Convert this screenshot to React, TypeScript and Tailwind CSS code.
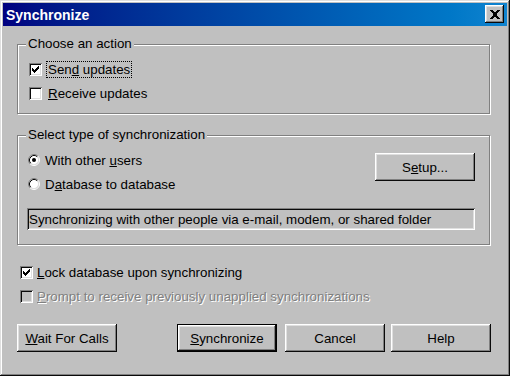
import React from 'react';

const raised =
  'shadow-[inset_-1px_-1px_0_#0a0a0a,inset_1px_1px_0_#ffffff,inset_-2px_-2px_0_#808080,inset_2px_2px_0_#dfdfdf]';
const sunken =
  'shadow-[inset_1px_1px_0_#808080,inset_-1px_-1px_0_#ffffff,inset_2px_2px_0_#0a0a0a,inset_-2px_-2px_0_#dfdfdf]';

function CheckBox({ checked, disabled }: { checked?: boolean; disabled?: boolean }) {
  return (
    <div className={`relative w-[13px] h-[13px] shrink-0 ${disabled ? 'bg-[#c0c0c0]' : 'bg-white'} ${sunken}`}>
      {checked && (
        <svg width="7" height="7" viewBox="0 0 7 7" className="absolute left-[3px] top-[3px]" shapeRendering="crispEdges">
          <path
            fill="#000"
            d="M6 0h1v3h-1zM5 1h1v3h-1zM4 2h1v3h-1zM0 2h1v3h-1zM1 3h1v3h-1zM2 4h1v3h-1zM3 3h1v3h-1z"
          />
        </svg>
      )}
    </div>
  );
}

function Radio({ checked }: { checked?: boolean }) {
  return (
    <svg width="12" height="12" viewBox="0 0 12 12" className="shrink-0">
      <circle cx="6" cy="6" r="4.5" fill="#fff" />
      <path d="M2.11 9.89A5.5 5.5 0 0 1 9.89 2.11" fill="none" stroke="#808080" strokeWidth="1" />
      <path d="M9.89 2.11A5.5 5.5 0 0 1 2.11 9.89" fill="none" stroke="#fff" strokeWidth="1" />
      <path d="M2.82 9.18A4.5 4.5 0 0 1 9.18 2.82" fill="none" stroke="#0a0a0a" strokeWidth="1" />
      <path d="M9.18 2.82A4.5 4.5 0 0 1 2.82 9.18" fill="none" stroke="#dfdfdf" strokeWidth="1" />
      {checked && <circle cx="6" cy="6" r="2" fill="#000" />}
    </svg>
  );
}

function Button({ children, isDefault, className = '' }: { children: React.ReactNode; isDefault?: boolean; className?: string }) {
  return (
    <div className={`w-[100px] h-[28px] shrink-0 ${isDefault ? 'border border-black' : ''} ${className}`}>
      <div className={`w-full h-full flex items-center justify-center bg-[#c0c0c0] text-black ${raised}`}>{children}</div>
    </div>
  );
}

function GroupBox({ label, className = '', children }: { label: string; className?: string; children: React.ReactNode }) {
  return (
    <div className={`relative w-[473px] border border-[#808080] shadow-[inset_1px_1px_0_#ffffff,1px_1px_0_#ffffff] ${className}`}>
      <span className="absolute left-[8px] -top-[9px] px-[2px] bg-[#c0c0c0] leading-[15px]">{label}</span>
      {children}
    </div>
  );
}

export default function App() {
  return (
    <div
      className={`w-[510px] h-[376px] p-[3px] bg-[#c0c0c0] text-[13.33px] text-black overflow-hidden flex flex-col shadow-[inset_-1px_-1px_0_#0a0a0a,inset_1px_1px_0_#dfdfdf,inset_-2px_-2px_0_#808080,inset_2px_2px_0_#ffffff]`}
      style={{ fontFamily: '"Liberation Sans", Arial, sans-serif' }}
    >
      {/* title bar */}
      <div className="h-[23px] shrink-0 flex items-center justify-between pl-[3px] pr-[3px] bg-gradient-to-r from-[#000080] to-[#1084d0]">
        <span className="text-white font-bold text-[14px] leading-none">Synchronize</span>
        <div className={`w-[19px] h-[18px] mb-[1px] bg-[#c0c0c0] flex items-center justify-center ${raised}`}>
          <svg width="10" height="9" viewBox="0 0 10 9" shapeRendering="crispEdges">
            <path
              fill="#000"
              d="M0 0h3v1h-3zM7 0h3v1h-3zM1 1h3v1h-3zM6 1h3v1h-3zM2 2h6v1h-6zM3 3h4v3h-4zM2 6h6v1h-6zM1 7h3v1h-3zM6 7h3v1h-3zM0 8h3v1h-3zM7 8h3v1h-3z"
            />
          </svg>
        </div>
      </div>

      {/* body */}
      <div className="flex flex-col pl-[14px] leading-[15px]">
        <GroupBox label="Choose an action" className="mt-[18px] h-[70px] pt-[12px] pl-[11px]">
          <div className="h-[24px] flex items-center">
            <CheckBox checked />
            <span className="ml-[4px] px-[1px] border border-dotted border-black leading-[15px]">
              Sen<u>d</u> updates
            </span>
          </div>
          <div className="h-[24px] flex items-center">
            <CheckBox />
            <span className="ml-[6px]">
              <u>R</u>eceive updates
            </span>
          </div>
        </GroupBox>

        <GroupBox label="Select type of synchronization" className="mt-[21px] h-[110px] pt-[12px] pl-[9px] pr-[14px]">
          <div className="flex justify-between">
            <div className="flex flex-col pl-[1px]">
              <div className="h-[24px] flex items-center">
                <Radio checked />
                <span className="ml-[5px]">
                  With other <u>u</u>sers
                </span>
              </div>
              <div className="h-[24px] flex items-center">
                <Radio />
                <span className="ml-[5px]">
                  D<u>a</u>tabase to database
                </span>
              </div>
            </div>
            <Button className="mt-[5px]">
              <span>
                S<u>e</u>tup...
              </span>
            </Button>
          </div>
          <div className={`mt-[12px] h-[22px] flex items-center pl-[2px] bg-[#c0c0c0] ${sunken}`}>
            Synchronizing with other people via e-mail, modem, or shared folder
          </div>
        </GroupBox>

        <div className="mt-[15px] h-[24px] flex items-center pl-[3px]">
          <CheckBox checked />
          <span className="ml-[4px]">
            <u>L</u>ock database upon synchronizing
          </span>
        </div>
        <div className="h-[24px] flex items-center pl-[3px]">
          <CheckBox disabled />
          <span className="ml-[4px] text-[#808080] [text-shadow:1px_1px_0_#ffffff]">
            <u>P</u>rompt to receive previously unapplied synchronizations
          </span>
        </div>

        <div className="mt-[16px] flex">
          <Button>
            <span>
              <u>W</u>ait For Calls
            </span>
          </Button>
          <Button isDefault className="ml-[60px]">
            <span>
              <u>S</u>ynchronize
            </span>
          </Button>
          <Button className="ml-[8px]">Cancel</Button>
          <Button className="ml-[6px]">Help</Button>
        </div>
      </div>
    </div>
  );
}
